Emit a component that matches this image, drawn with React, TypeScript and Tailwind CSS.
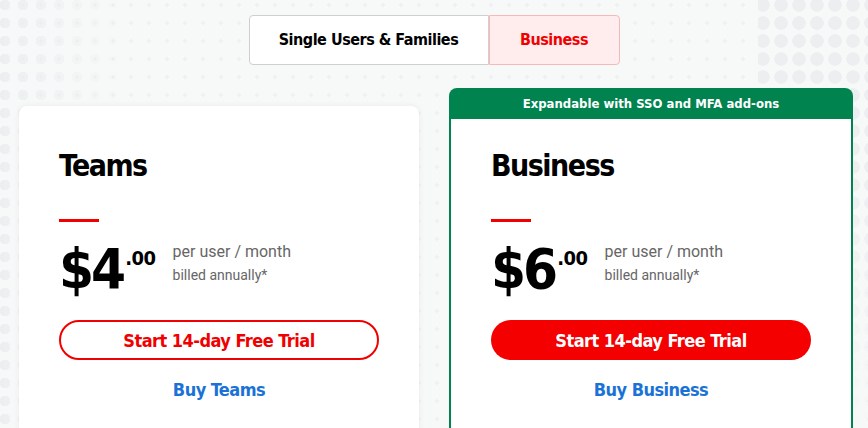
import React from "react";

const head = "font-['DejaVu_Sans_Condensed','DejaVu_Sans',sans-serif] tracking-[-0.03em]";
const body = "font-['Roboto','Liberation_Sans',sans-serif]";

function Price({ amount }: { amount: string }) {
  return (
    <div className="flex items-start mt-[24px] h-[46px]">
      <div className={`${head} flex items-start font-bold text-black`}>
        <span className="text-[56px] leading-[46px] !tracking-[-3px]">${amount}</span>
        <span className="text-[20px] leading-none mt-[2px] ml-[2px]">.00</span>
      </div>
      <div className={`${body} ml-[17px] mt-[-3px] text-[#666]`}>
        <div className="text-[16px] leading-[18px]">per user / month</div>
        <div className="text-[14px] leading-[18px] mt-[5px]">billed annually*</div>
      </div>
    </div>
  );
}

export default function App() {
  return (
    <div className="relative w-[868px] h-[428px] overflow-hidden bg-[#f7f8f8]">
      {/* dotted background */}
      <div className="absolute inset-0 bg-[radial-gradient(circle,#eef0f1_1.5px,transparent_2px)] bg-[length:18px_18px] bg-[position:-4px_-4px]" />
      <div className="absolute left-0 top-0 w-[120px] h-[428px] bg-[radial-gradient(circle,#eceef0_5px,transparent_5.5px)] bg-[length:18px_18px] bg-[position:-4px_-4px] [mask-image:linear-gradient(to_right,black,transparent)]" />
      <div className="absolute right-0 top-0 w-[110px] h-[428px] bg-[radial-gradient(circle,#eceef0_6.5px,transparent_7px)] bg-[length:18px_18px] bg-[position:-4px_-4px] [mask-image:linear-gradient(to_bottom,black_40%,transparent)]" />

      <div className="relative flex flex-col items-center pt-[15px]">
        {/* toggle */}
        <div className={`${head} flex font-bold text-[16px]`}>
          <div className="w-[240px] h-[50px] flex items-center justify-center bg-white border border-[#cfcfcf] rounded-l-[4px] text-black">
            Single Users &amp; Families
          </div>
          <div className="w-[131px] h-[50px] flex items-center justify-center bg-[#ffecec] border border-[#f6b9b9] rounded-r-[4px] text-[#f00000]">
            Business
          </div>
        </div>

        <div className="flex gap-[30px] w-full pl-[19px] mt-[23px]">
          {/* Teams card */}
          <div className="w-[400px] h-[340px] mt-[18px] bg-white rounded-[8px] shadow-[0_0_6px_rgba(0,0,0,0.06)] px-[40px] pt-[40px]">
            <h2 className={`${head} !tracking-[-0.05em] font-bold text-[30px] leading-[40px] text-black`}>Teams</h2>
            <div className="w-[40px] h-[3px] bg-[#f00000] mt-[33px]" />
            <Price amount="4" />
            <button className={`${head} block mt-[28px] w-[320px] h-[40px] rounded-full border-2 border-[#f00000] text-[#f00000] font-bold text-[18px]`}>
              Start 14-day Free Trial
            </button>
            <div className={`${head} mt-[19px] text-center text-[#1b72d6] font-bold text-[18px] leading-[22px]`}>Buy Teams</div>
          </div>

          {/* Business card */}
          <div className="w-[404px] h-[360px] rounded-[8px] bg-[#00834f] p-[2px] pt-0 overflow-hidden">
            <div className={`${head} !tracking-normal h-[31px] flex items-center justify-center text-white font-bold text-[13px]`}>
              Expandable with SSO and MFA add-ons
            </div>
            <div className="bg-white h-full px-[40px] pt-[27px]">
              <h2 className={`${head} !tracking-[-0.05em] font-bold text-[30px] leading-[40px] text-black`}>Business</h2>
              <div className="w-[40px] h-[3px] bg-[#f00000] mt-[33px]" />
              <Price amount="6" />
              <button className={`${head} block mt-[28px] w-[320px] h-[40px] rounded-full bg-[#f40000] text-white font-bold text-[18px]`}>
                Start 14-day Free Trial
              </button>
              <div className={`${head} mt-[19px] text-center text-[#1b72d6] font-bold text-[18px] leading-[22px]`}>Buy Business</div>
            </div>
          </div>
        </div>
      </div>
    </div>
  );
}
